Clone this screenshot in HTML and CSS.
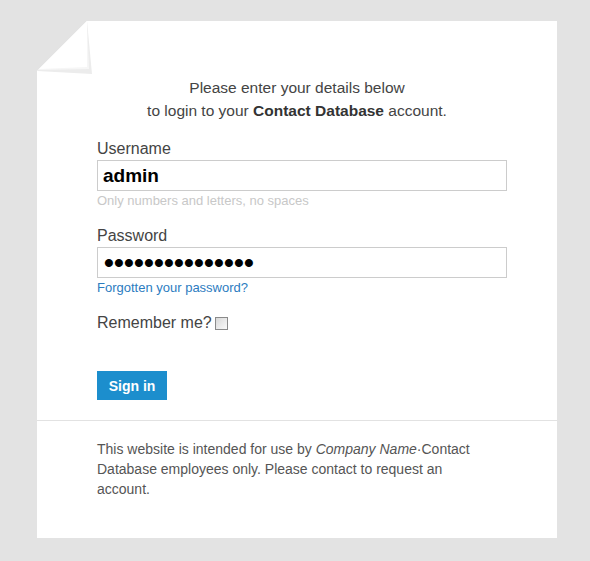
FILE: index.html
```
<!DOCTYPE html>
<html lang="en">
<head>
    <meta charset="UTF-8">
    <meta name="viewport" content="width=device-width, initial-scale=1.0">
    <title>Contact Database - Login</title>
    <link rel="stylesheet" href="styles.css">
</head>
<body>

    <div class="card">
        <svg class="fold" width="60" height="60" viewBox="0 0 60 60">
            <polygon points="0,0 50,0 0,50" fill="#e3e3e3"/>
            <polygon points="50,0 0,50 55,53" fill="#ececec"/>
            <polygon points="50,0 1,49 52,48" fill="#f6f6f6"/>
            <polygon points="50,0 2,48 50,46" fill="#ffffff"/>
        </svg>

        <p class="intro">Please enter your details below<br>to login to your <b>Contact Database</b> account.</p>

        <form class="login">
            <label for="username">Username</label>
            <input type="text" id="username" value="admin">
            <span class="hint">Only numbers and letters, no spaces</span>

            <label for="password" class="pw-label">Password</label>
            <input type="password" id="password" value="secretpassword1">
            <a href="#" class="forgot">Forgotten your password?</a>

            <div class="remember">
                <label for="remember">Remember me?</label>
                <input type="checkbox" id="remember">
            </div>

            <button type="button" class="signin">Sign in</button>
        </form>

        <div class="footer">
            <p>This website is intended for use by <i>Company Name</i>&middot;Contact Database employees only. Please contact to request an account.</p>
        </div>
    </div>

</body>
</html>
```

FILE: styles.css
```
body {
    margin: 0;
    padding: 21px 33px 23px 37px;
    background: #e3e3e3;
    font-family: "Liberation Sans", Arial, sans-serif;
    color: #444;
}
.card {
    position: relative;
    width: 520px;
    height: 517px;
    background: #fff;
}
.fold {
    position: absolute;
    top: 0;
    left: 0;
}
.intro {
    margin: 0;
    padding-top: 55px;
    font-size: 15.5px;
    line-height: 23px;
    text-align: center;
}
.intro b {
    color: #333;
}
.login {
    display: flex;
    flex-direction: column;
    align-items: flex-start;
    padding: 17px 50px 20px 60px;
    border-bottom: 1px solid #e2e2e2;
}
.login label {
    font-size: 16px;
    line-height: 20px;
}
.login input[type="text"], .login input[type="password"] {
    box-sizing: border-box;
    width: 410px;
    height: 31px;
    margin: 1px 0 0;
    padding: 0 5px;
    border: 1px solid #ccc;
    font-family: "Liberation Sans", Arial, sans-serif;
    font-size: 19px;
    font-weight: bold;
    color: #000;
    outline: none;
}
.login input[type="password"] {
    padding: 0 6px;
    font-size: 28px;
    letter-spacing: 0.2px;
}
.hint {
    margin-top: 2px;
    font-size: 13px;
    line-height: 16px;
    color: #c8c8c8;
}
.pw-label {
    margin-top: 17px;
}
.forgot {
    margin-top: 2px;
    font-size: 13px;
    line-height: 16px;
    color: #2c7cbf;
    text-decoration: none;
}
.remember {
    display: flex;
    align-items: center;
    margin-top: 17px;
}
.remember input {
    -webkit-appearance: none;
    appearance: none;
    box-sizing: border-box;
    width: 13px;
    height: 13px;
    margin: 0 0 0 3px;
    border: 1px solid #8a8a8a;
    background: linear-gradient(135deg, #d8d8d8, #fafafa);
}
.signin {
    margin-top: 38px;
    width: 70px;
    height: 29px;
    padding: 0;
    border: none;
    background: #1c8ecd;
    color: #fff;
    font-family: "Liberation Sans", Arial, sans-serif;
    font-size: 14px;
    font-weight: bold;
}
.footer {
    padding: 18px 60px;
}
.footer p {
    margin: 0;
    font-size: 14px;
    line-height: 20px;
    color: #555;
}
```
